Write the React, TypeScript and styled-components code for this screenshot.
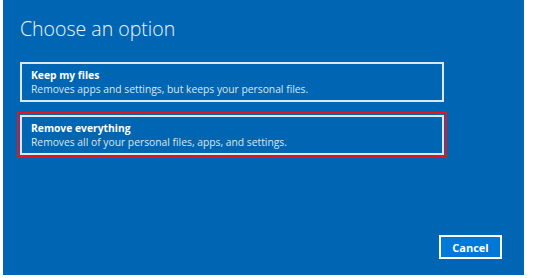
import styled, { createGlobalStyle } from "styled-components";

const GlobalStyle = createGlobalStyle`
  body {
    margin: 0;
    background: #ffffff;
    font-family: "Open Sans", "Noto Sans", sans-serif;
  }
`;

function App() {
  return (
    <>
      <GlobalStyle />
      <Screen>
        <Title>Choose an option</Title>
        <OptionList>
          <Option type="button">
            <OptionTitle>Keep my files</OptionTitle>
            <OptionText>Removes apps and settings, but keeps your personal files.</OptionText>
          </Option>
          <Option type="button" $selected>
            <OptionTitle>Remove everything</OptionTitle>
            <OptionText>Removes all of your personal files, apps, and settings.</OptionText>
          </Option>
        </OptionList>
        <Footer>
          <CancelButton type="button">Cancel</CancelButton>
        </Footer>
      </Screen>
    </>
  );
}

const Screen = styled.div`
  display: flex;
  flex-direction: column;
  box-sizing: border-box;
  width: 521px;
  height: 275px;
  margin-left: 3px;
  padding: 15px 0 16px 17px;
  background: #0066b3;
  color: #ffffff;
`;

const Title = styled.h1`
  margin: 0;
  font-size: 19.5px;
  line-height: 28px;
  font-weight: 300;
  color: #f2f6fa;
`;

const OptionList = styled.div`
  display: flex;
  flex-direction: column;
  gap: 13px;
  margin-top: 19px;
`;

const Option = styled.button<{ $selected?: boolean }>`
  display: flex;
  flex-direction: column;
  box-sizing: border-box;
  width: 424px;
  height: 40px;
  padding: 4px 9px;
  border: 2px solid rgba(255, 255, 255, 0.85);
  background: transparent;
  text-align: left;
  font-family: inherit;
  color: #ffffff;
  outline: ${({ $selected }) => ($selected ? "2px solid #e3161d" : "none")};
  outline-offset: 1px;
`;

const OptionTitle = styled.span`
  font-size: 10.3px;
  line-height: 14px;
  font-weight: 700;
`;

const OptionText = styled.span`
  font-size: 10.3px;
  line-height: 15px;
  color: #dbe7f2;
`;

const Footer = styled.div`
  display: flex;
  justify-content: flex-end;
  margin-top: auto;
  padding-right: 22px;
`;

const CancelButton = styled.button`
  box-sizing: border-box;
  width: 63px;
  height: 24px;
  border: 2px solid #ffffff;
  background: #0078d7;
  color: #ffffff;
  font-family: inherit;
  font-size: 11px;
  font-weight: 700;
  padding: 0;
`;

export default App;
